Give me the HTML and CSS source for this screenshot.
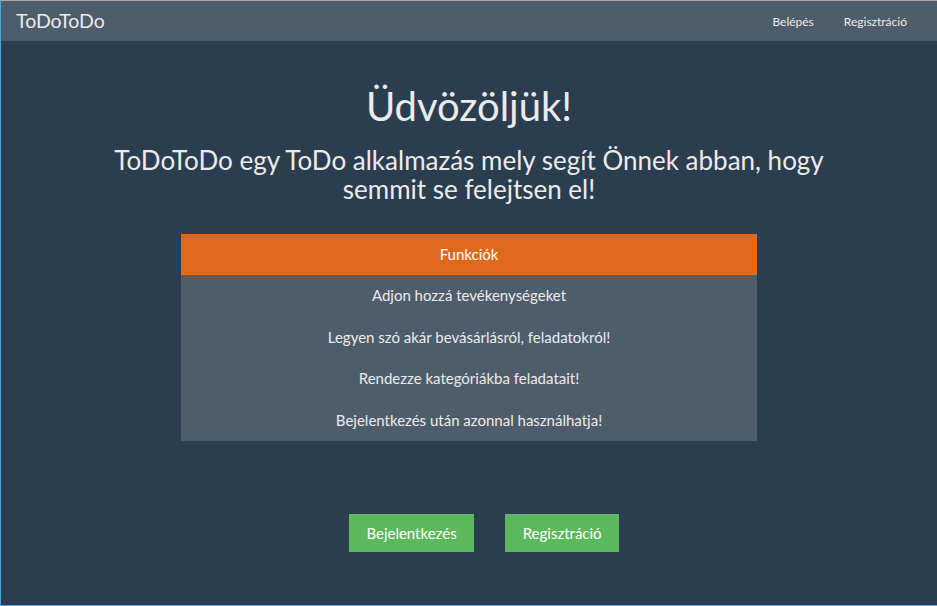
FILE: index.html
```html
<!DOCTYPE html>
<html lang="hu">
<head>
<meta charset="utf-8">
<title>ToDoToDo</title>
<link rel="stylesheet" href="styles.css">
</head>
<body>
<div class="frame">
  <nav class="navbar">
    <a class="brand" href="#">ToDoToDo</a>
    <ul class="nav">
      <li><a href="#">Belépés</a></li>
      <li><a href="#">Regisztráció</a></li>
    </ul>
  </nav>
  <main class="content">
    <h1 class="title">Üdvözöljük!</h1>
    <h2 class="subtitle">ToDoToDo egy ToDo alkalmazás mely segít Önnek abban, hogy semmit se felejtsen el!</h2>
    <div class="features">
      <div class="features-head">Funkciók</div>
      <div class="feature">Adjon hozzá tevékenységeket</div>
      <div class="feature">Legyen szó akár bevásárlásról, feladatokról!</div>
      <div class="feature">Rendezze kategóriákba feladatait!</div>
      <div class="feature">Bejelentkezés után azonnal használhatja!</div>
    </div>
    <div class="actions">
      <a class="btn" href="#">Bejelentkezés</a>
      <a class="btn" href="#">Regisztráció</a>
    </div>
  </main>
</div>
</body>
</html>
```
FILE: styles.css
```css
* { box-sizing: border-box; }
html, body { margin: 0; padding: 0; }
body {
  font-family: Lato, "Open Sans", sans-serif;
  font-size: 15px;
  line-height: 1.42857;
  color: #ebebeb;
  background: #2b3e50;
}
.frame {
  height: 606px;
  border-top: 1px solid #a9a9a9;
  border-left: 1px solid #4aa8e6;
  border-bottom: 1px solid #4aa8e6;
  background: #2b3e50;
  overflow: hidden;
}
.navbar {
  height: 40px;
  background: #4e5d6c;
  display: flex;
  align-items: center;
  justify-content: space-between;
  padding: 0 15px;
}
.brand {
  color: #ebebeb;
  text-decoration: none;
  font-size: 19.5px;
}
.nav {
  list-style: none;
  margin: 0;
  padding: 0 15px 0 0;
  display: flex;
  gap: 30px;
}
.nav a {
  color: #ebebeb;
  text-decoration: none;
  font-size: 12px;
}
.content {
  display: flex;
  flex-direction: column;
  align-items: center;
  text-align: center;
}
.title {
  margin: 43px 0 0;
  font-size: 40px;
  font-weight: 400;
  line-height: 1.1;
}
.subtitle {
  margin: 18px 0 0;
  width: 740px;
  font-size: 26px;
  font-weight: 400;
  line-height: 1.1;
}
.features {
  margin-top: 31px;
  width: 576px;
  background: #4e5d6c;
}
.features-head {
  background: #df691a;
  color: #fff;
  height: 41px;
  display: flex;
  align-items: center;
  justify-content: center;
}
.feature {
  height: 41.5px;
  display: flex;
  align-items: center;
  justify-content: center;
}
.actions {
  margin-top: 73px;
  display: flex;
  gap: 31px;
  padding-left: 30px;
}
.btn {
  display: block;
  background: #5cb85c;
  color: #fff;
  text-decoration: none;
  padding: 8px 17.5px;
  height: 38px;
  line-height: 22px;
}
```
